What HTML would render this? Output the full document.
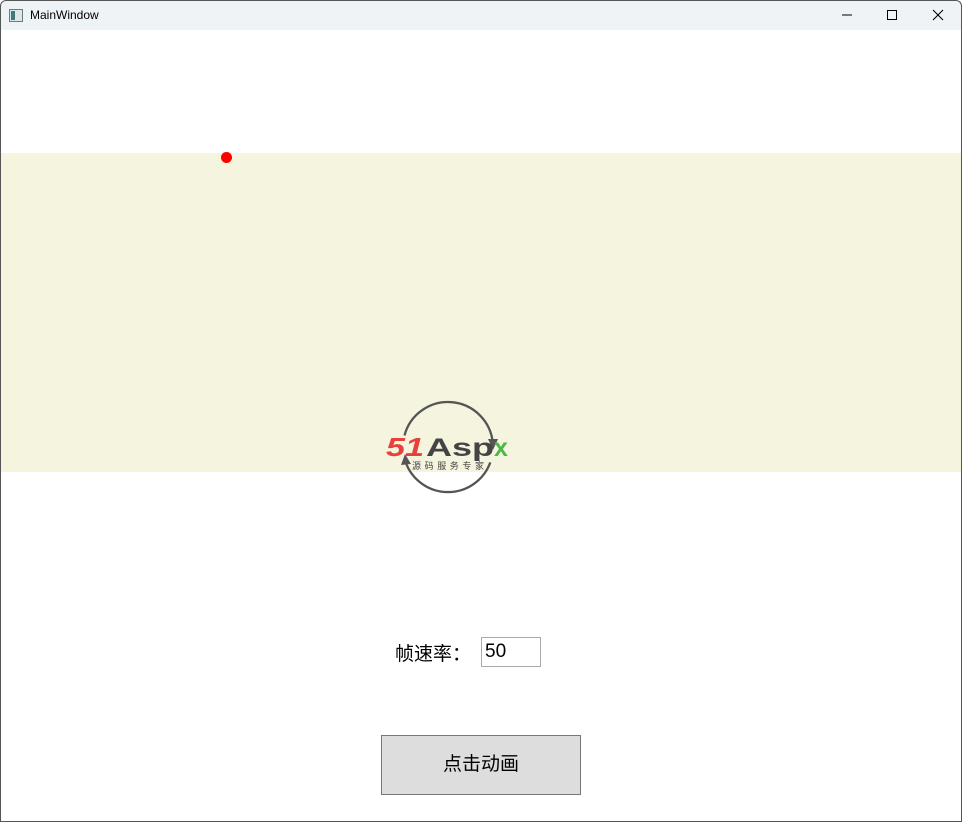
<!DOCTYPE html>
<html><head><meta charset="utf-8"><style>
html,body{margin:0;padding:0;width:962px;height:822px;overflow:hidden;background:#fff;font-family:"Liberation Sans","Noto Sans CJK SC",sans-serif;}
.frame{position:absolute;left:0;top:0;width:960px;height:820px;border:1px solid #555;border-radius:6px 6px 0 0;}
.title{position:absolute;left:1px;top:1px;width:960px;height:29px;background:#eef3f8;}
.title .t{position:absolute;left:29px;top:7px;font-size:12px;color:#000}
.icon{position:absolute;left:8px;top:8px;width:12px;height:11px;border:1px solid #6a7a80;background:#dfe6e8}
.icon:before{content:"";position:absolute;left:1px;top:1px;width:4px;height:9px;background:#3c7a7c}
.band{position:absolute;left:1px;top:153px;width:960px;height:319px;background:#f5f4df}
.dot{position:absolute;left:221px;top:152px;width:11px;height:11px;border-radius:50%;background:#ff0000}
.lbl{position:absolute;left:395px;top:639px;font-size:19px;color:#000}
.inp{position:absolute;left:481px;top:637px;font-size:19px;line-height:28px;padding-left:3px;box-sizing:border-box;width:60px;height:30px;border:1px solid #aaa}
.btn{position:absolute;left:381px;top:735px;width:198px;height:58px;background:#dddddd;border:1px solid #777;font-size:19px;text-align:center;line-height:58px}
</style></head><body>
<div class="title"><div class="icon"></div><div class="t">MainWindow</div>
<svg style="position:absolute;left:829px;top:-1px" width="130" height="30">
<line x1="12" y1="15" x2="22" y2="15" stroke="#000" stroke-width="1"/>
<rect x="57.5" y="10.5" width="9" height="9" fill="none" stroke="#000"/>
<path d="M103 10 L113 20 M113 10 L103 20" stroke="#000" stroke-width="1.1"/>
</svg></div>
<div class="band"></div>
<div class="dot"></div>
<div class="frame"></div>
<svg style="position:absolute;left:380px;top:395px" width="140" height="105">
<path d="M24.5 40.4 A45 45 0 0 1 112.8 48" fill="none" stroke="#555" stroke-width="2.3"/>
<path d="M108 44 L113 55 L118 44 Z" fill="#555"/>
<path d="M110.3 67.4 A45 45 0 0 1 25.7 67.4" fill="none" stroke="#555" stroke-width="2.3"/>
<path d="M21 70 L25 59 L31 69 Z" fill="#555"/>
<text x="6" y="61" font-family="Liberation Sans" font-style="italic" font-weight="bold" font-size="26" fill="#e8403b" textLength="38" lengthAdjust="spacingAndGlyphs">51</text>
<text x="46" y="61" font-family="Liberation Sans" font-weight="bold" font-size="25" fill="#444" textLength="68" lengthAdjust="spacingAndGlyphs">Asp</text>
<text x="114" y="61" font-family="Liberation Sans" font-weight="bold" font-size="25" fill="#4cb848">x</text>
<text x="32" y="74" font-family="Noto Sans CJK SC" font-size="9" fill="#444" textLength="72" lengthAdjust="spacing">源码服务专家</text>
</svg>
<div class="lbl">帧速率：</div>
<div class="inp">50</div>
<div class="btn">点击动画</div>
</body></html>
